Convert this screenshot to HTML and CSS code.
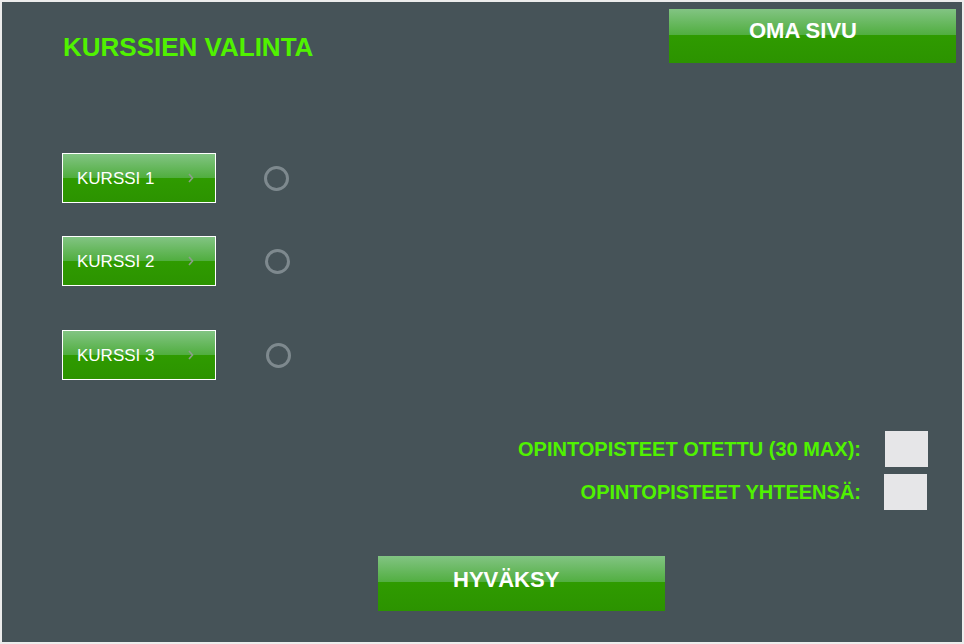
FILE: index.html
```html
<!DOCTYPE html>
<html lang="fi">
<head>
<meta charset="utf-8">
<title>Kurssien valinta</title>
<link rel="stylesheet" href="styles.css">
</head>
<body>
<main class="panel">
  <header class="header">
    <h1 class="title">KURSSIEN VALINTA</h1>
    <button class="big-btn big-btn--oma">OMA SIVU</button>
  </header>

  <section class="courses">
    <div class="course-row">
      <button class="course-btn"><span>KURSSI 1</span>
        <svg class="chev" width="6" height="10" viewBox="0 0 6 10"><polyline points="1,1 4.5,5 1,9" fill="none" stroke="#8e9e8c" stroke-width="1.6"/></svg>
      </button>
      <span class="radio"></span>
    </div>
    <div class="course-row course-row--2">
      <button class="course-btn"><span>KURSSI 2</span>
        <svg class="chev" width="6" height="10" viewBox="0 0 6 10"><polyline points="1,1 4.5,5 1,9" fill="none" stroke="#8e9e8c" stroke-width="1.6"/></svg>
      </button>
      <span class="radio radio--2"></span>
    </div>
    <div class="course-row course-row--3">
      <button class="course-btn"><span>KURSSI 3</span>
        <svg class="chev" width="6" height="10" viewBox="0 0 6 10"><polyline points="1,1 4.5,5 1,9" fill="none" stroke="#8e9e8c" stroke-width="1.6"/></svg>
      </button>
      <span class="radio radio--3"></span>
    </div>
  </section>

  <section class="credits">
    <span class="credit-label">OPINTOPISTEET OTETTU (30 MAX):</span>
    <span class="credit-box"></span>
    <span class="credit-label">OPINTOPISTEET YHTEENSÄ:</span>
    <span class="credit-box credit-box--2"></span>
  </section>

  <div class="footer">
    <button class="big-btn big-btn--ok">HYVÄKSY</button>
  </div>
</main>
</body>
</html>
```

FILE: styles.css
```css
* { box-sizing: border-box; }

html, body {
  margin: 0;
  padding: 0;
  background: #ececec;
  width: 964px;
  height: 644px;
  overflow: hidden;
}

.panel {
  margin: 2px;
  width: 960px;
  height: 640px;
  background: #465358;
  font-family: "Liberation Sans", Arial, sans-serif;
  display: flex;
  flex-direction: column;
}

.header {
  display: flex;
  justify-content: space-between;
  align-items: flex-start;
  padding: 7px 6px 0 61px;
}

.title {
  margin: 25px 0 0 0;
  font-size: 26px;
  line-height: 26px;
  font-weight: bold;
  color: #50f200;
}

.big-btn {
  display: block;
  width: 287px;
  height: 54px;
  border: 0;
  margin: 0;
  padding: 0 0 10px 80px;
  text-align: left;
  font-family: "Liberation Sans", Arial, sans-serif;
  font-size: 22px;
  line-height: 22px;
  font-weight: bold;
  color: #ffffff;
  background: linear-gradient(to bottom, #82c483 0%, #51ae40 48%, #2f9b00 48%, #2c9300 100%);
  cursor: pointer;
}

.big-btn--ok {
  height: 55px;
  padding: 0 0 7px 75px;
}

.courses {
  margin-top: 90px;
  padding-left: 60px;
  display: flex;
  flex-direction: column;
}

.course-row {
  display: flex;
  align-items: center;
  gap: 48px;
}

.course-row--2 { margin-top: 33px; }
.course-row--3 { margin-top: 44px; }

.course-btn {
  width: 154px;
  height: 50px;
  border: 1px solid #ffffff;
  margin: 0;
  padding: 2px 0 0 14px;
  display: flex;
  align-items: center;
  font-family: "Liberation Sans", Arial, sans-serif;
  font-size: 17px;
  color: #ffffff;
  background: linear-gradient(to bottom, #82c483 0%, #51ae40 49%, #2f9b00 49%, #2c9300 100%);
  cursor: pointer;
}

.course-btn span {
  flex: 1;
  text-align: left;
}

.chev {
  margin-right: 21px;
  margin-top: -3px;
}

.radio {
  width: 25px;
  height: 25px;
  border: 3px solid #7e898e;
  border-radius: 50%;
}

.radio--2 { margin-left: 1px; }
.radio--3 { margin-left: 2px; }

.credits {
  margin-top: 51px;
  padding-right: 34px;
  display: grid;
  grid-template-columns: auto 43px;
  justify-content: end;
  column-gap: 24px;
  row-gap: 7px;
  align-items: center;
}

.credit-label {
  font-size: 20px;
  font-weight: bold;
  color: #50f200;
  text-align: right;
  line-height: 22px;
}

.credit-box {
  display: block;
  width: 43px;
  height: 36px;
  background: #e6e6e8;
}

.credit-box--2 {
  margin-left: -1px;
}

.footer {
  margin-top: 46px;
  padding-left: 376px;
}
```
